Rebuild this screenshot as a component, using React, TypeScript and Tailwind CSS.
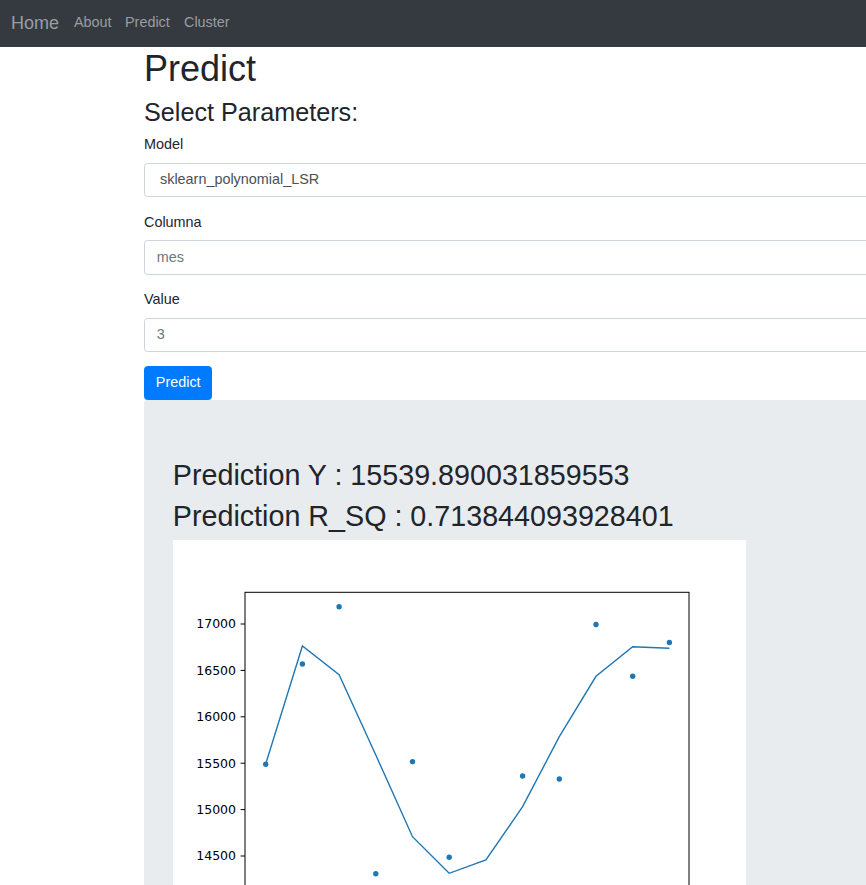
import React from "react";

const xs = [92.7, 129.4, 166.1, 202.8, 239.5, 276.2, 312.9, 349.6, 386.3, 423, 459.7, 496.4];
const lineY = [224, 106, 134.7, 215, 296.7, 333.3, 320, 266.7, 196.7, 136.3, 106.7, 108.3];
const dots: [number, number][] = [
  [92.7, 224.3],
  [129.4, 124],
  [166.1, 66.7],
  [202.8, 333.7],
  [239.5, 221.7],
  [276.2, 317.3],
  [312.9, 420],
  [349.6, 236],
  [386.3, 239],
  [423, 84.5],
  [459.7, 136.3],
  [496.4, 102.5],
];
const ticks = [17000, 16500, 16000, 15500, 15000, 14500, 14000];
const ty = (v: number) => 84 - (v - 17000) * 0.0928;

function Chart() {
  const pts = xs.map((x, i) => `${x},${lineY[i]}`).join(" ");
  return (
    <svg width="573" height="432" viewBox="0 0 573 432" className="block">
      <rect x="0" y="0" width="573" height="432" fill="#ffffff" />
      <polyline points={pts} fill="none" stroke="#1f77b4" strokeWidth="1.4" strokeLinejoin="miter" />
      {dots.map(([x, y], i) => (
        <circle key={i} cx={x} cy={y} r="2.7" fill="#1f77b4" />
      ))}
      <rect x="72" y="52.3" width="444" height="400" fill="none" stroke="#000" strokeWidth="1" />
      {ticks.map((t) => (
        <g key={t}>
          <line x1="67.6" x2="72" y1={ty(t)} y2={ty(t)} stroke="#000" strokeWidth="1" />
          <text
            x="63"
            y={ty(t) + 4.4}
            textAnchor="end"
            fontSize="12.5"
            fill="#000"
            fontFamily="'DejaVu Sans', sans-serif"
          >
            {t}
          </text>
        </g>
      ))}
    </svg>
  );
}

export default function App() {
  return (
    <div
      className="w-[866px] h-[885px] overflow-hidden bg-white text-[#212529]"
      style={{ fontFamily: "'Liberation Sans', Arial, sans-serif" }}
    >
      <nav className="h-[47px] bg-[#343a40] flex items-center pl-[11px] pb-[2px]">
        <span className="text-[18px] text-[#9a9da0] mr-[15px] leading-none">Home</span>
        <span className="text-[14.4px] text-[#9a9da0] mr-[13.4px] leading-none">About</span>
        <span className="text-[14.4px] text-[#9a9da0] mr-[14.2px] leading-none">Predict</span>
        <span className="text-[14.4px] text-[#9a9da0] leading-none">Cluster</span>
      </nav>
      <div className="ml-[144px] w-[1000px]">
        <h1 className="text-[36px] leading-[43px] mb-[7px]">Predict</h1>
        <h3 className="text-[25.2px] leading-[30px] mb-[7.3px]">Select Parameters:</h3>
        <div className="mb-[14.4px]">
          <div className="text-[14.4px] leading-[21.6px] mb-[7.2px]">Model</div>
          <div className="h-[34.2px] border border-[#ced4da] rounded-[3.6px] flex items-center pl-[15px] text-[14.4px] text-[#495057]">
            sklearn_polynomial_LSR
          </div>
        </div>
        <div className="mb-[14.4px]">
          <div className="text-[14.4px] leading-[21.6px] mb-[7.2px]">Columna</div>
          <div className="h-[34.2px] border border-[#ced4da] rounded-[3.6px] flex items-center pl-[11.8px] text-[14.4px] text-[#6c757d]">
            mes
          </div>
        </div>
        <div className="mb-[14.4px]">
          <div className="text-[14.4px] leading-[21.6px] mb-[7.2px]">Value</div>
          <div className="h-[34.2px] border border-[#ced4da] rounded-[3.6px] flex items-center pl-[11.8px] text-[14.4px] text-[#6c757d]">
            3
          </div>
        </div>
        <button className="block h-[34px] px-[10.8px] bg-[#007bff] text-white text-[14.4px] rounded-[3.6px] border border-[#007bff] pb-[2px]">
          Predict
        </button>
        <div className="bg-[#e9ecef] rounded-[3px] pt-[58px] px-[28.8px] pb-[57.6px]">
          <h2 className="text-[28.7px] leading-[34px] mb-[7px]">Prediction Y : 15539.890031859553</h2>
          <h2 className="text-[28.7px] leading-[34px] mb-[7px]">Prediction R_SQ : 0.713844093928401</h2>
          <Chart />
        </div>
      </div>
    </div>
  );
}
